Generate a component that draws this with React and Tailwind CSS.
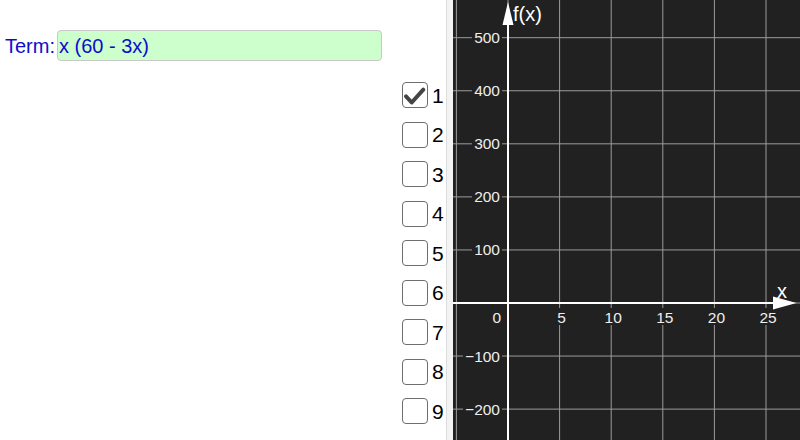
import React from "react";

const X0 = 55; // local x of origin
const Y0 = 303; // y of origin
const DX = 51.6 / 5; // px per unit
const DY = 53.06 / 100;

function Graph() {
  const xs = [-5, 0, 5, 10, 15, 20, 25, 30];
  const ys = [600, 500, 400, 300, 200, 100, 0, -100, -200, -300];
  const xl = [5, 10, 15, 20, 25];
  const yl = [500, 400, 300, 200, 100, -100, -200];
  const fmt = (v) => (v < 0 ? "\u2212" + Math.abs(v) : String(v));
  return (
    <svg width="347" height="440" className="block" style={{ fontFamily: '"Liberation Sans", Arial, sans-serif' }}>
      {xs.map((v) => (
        <line key={"vx" + v} x1={X0 + v * DX} x2={X0 + v * DX} y1={0} y2={440} stroke="#9c9c9c" strokeWidth="1" />
      ))}
      {ys.map((v) => (
        <line key={"hy" + v} x1={0} x2={347} y1={Y0 - v * DY} y2={Y0 - v * DY} stroke="#9c9c9c" strokeWidth="1" />
      ))}
      {yl.map((v) => {
        const t = fmt(v);
        const w = v < 0 ? 35 : 26;
        const y = Y0 - v * DY;
        return (
          <g key={"yl" + v}>
            <rect x={47 - w - 2} y={y - 8} width={w + 4} height={16} fill="#212121" />
            <text x={47} y={y + 5.5} fill="#eeeeee" fontSize="15.5" textAnchor="end">{t}</text>
          </g>
        );
      })}
      {xl.map((v) => {
        const t = String(v);
        const x = X0 + v * DX + 2;
        const w = t.length * 8.6;
        return (
          <g key={"xl" + v}>
            <rect x={x - w / 2 - 1} y={308} width={w + 2} height={17} fill="#212121" />
            <text x={x} y={322.5} fill="#eeeeee" fontSize="15.5" textAnchor="middle">{t}</text>
          </g>
        );
      })}
      <text x={48} y={322.5} fill="#eeeeee" fontSize="15.5" textAnchor="end">0</text>
      {/* axes */}
      <line x1={X0} x2={X0} y1={20} y2={440} stroke="#ffffff" strokeWidth="2" />
      <polygon points={`${X0},2 ${X0 - 5.5},25 ${X0 + 5.5},25`} fill="#ffffff" />
      <line x1={0} x2={322} y1={Y0} y2={Y0} stroke="#ffffff" strokeWidth="2" />
      <polygon points={`320,296.5 343.5,${Y0} 320,309.5`} fill="#ffffff" />
      <text x={60} y={21} fill="#ffffff" fontSize="20">f(x)</text>
      <text x={324} y={298} fill="#ffffff" fontSize="20">x</text>
    </svg>
  );
}

function Box({ n, checked }) {
  return (
    <div className="flex items-center h-[26px]">
      <div className="w-[26px] h-[26px] rounded-[4px] border-[1.5px] border-[#6e6e6e] bg-white flex items-center justify-center">
        {checked && (
          <svg width="26" height="26" viewBox="0 0 26 26" className="block -m-[1.5px]">
            <path d="M4 14.3 L9.7 20.5 L21.3 7.7" fill="none" stroke="#444444" strokeWidth="4" strokeLinecap="round" strokeLinejoin="round" />
          </svg>
        )}
      </div>
      <span className="ml-[4px] text-[21px] leading-none text-black">{n}</span>
    </div>
  );
}

export default function App() {
  return (
    <div className="w-[800px] h-[440px] flex bg-white overflow-hidden" style={{ fontFamily: '"Liberation Sans", Arial, sans-serif' }}>
      <div className="w-[447px] h-full border-r border-[#dcdcdc] flex flex-col">
        <div className="flex items-center mt-[30px] pl-[5px]">
          <span className="text-[20px] text-[#0d0dcc] leading-none">Term:</span>
          <div className="ml-[2px] flex-none w-[325px] h-[31px] rounded-[4px] border border-[#c8c8c8] bg-[#ccffcc] flex items-center pl-[1px]">
            <span className="text-[20px] text-[#0d0dcc] leading-none">x (60 - 3x)</span>
          </div>
        </div>
        <div className="ml-[402px] mt-[21px] flex flex-col gap-[13.5px]">
          {[1, 2, 3, 4, 5, 6, 7, 8, 9].map((n) => (
            <Box key={n} n={n} checked={n === 1} />
          ))}
        </div>
      </div>
      <div className="w-[6px] h-full bg-[#f3f3f3]" />
      <div className="flex-1 h-full bg-[#212121]">
        <Graph />
      </div>
    </div>
  );
}
